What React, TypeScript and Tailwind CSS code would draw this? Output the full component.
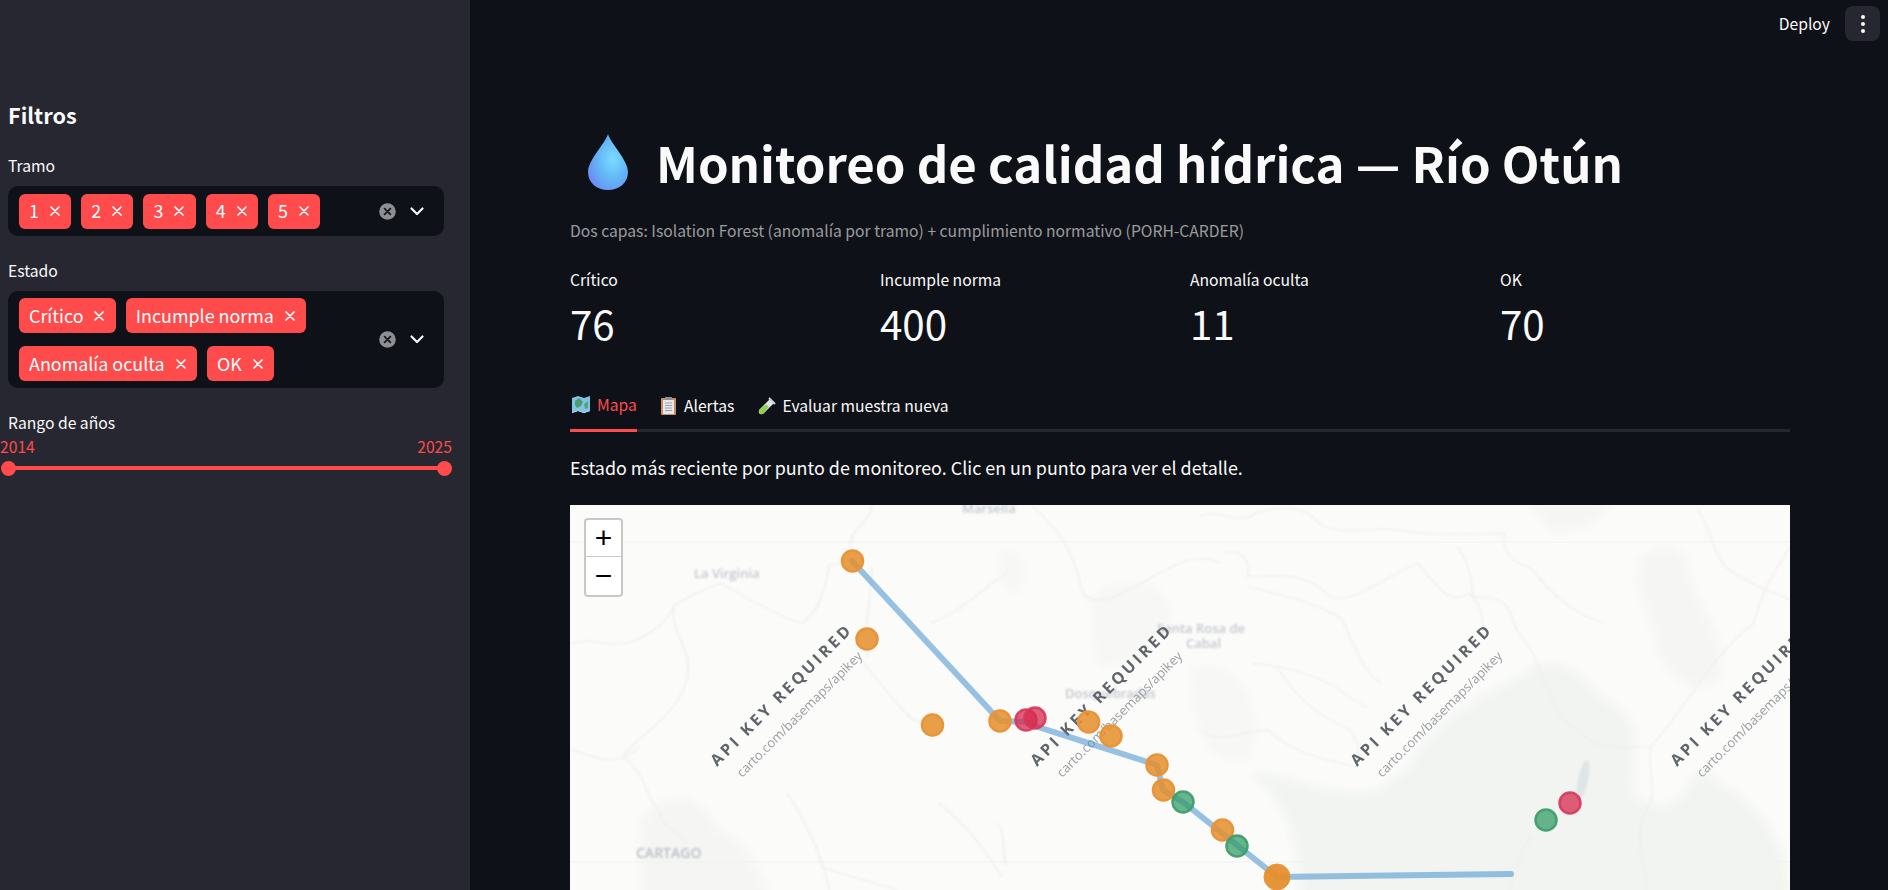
import React from 'react';

const FONT = "font-['Noto_Sans_CJK_SC','Source_Sans_Pro',sans-serif]";

function Pill({ label }: { label: string }) {
  return (
    <span className="flex h-[35px] items-center rounded-[6px] bg-[#ff4b4b] pl-[10px] pr-[11.3px] text-[17.9px] leading-none text-white">
      <span>{label}</span>
      <svg className="ml-[11px]" width="10" height="10" viewBox="0 0 10 10">
        <path d="M1 1L9 9M9 1L1 9" stroke="#fff" strokeWidth="1.7" strokeLinecap="round" />
      </svg>
    </span>
  );
}

function MultiSelect({ children }: { children: React.ReactNode }) {
  return (
    <div className="flex min-h-[50px] w-[436px] items-center rounded-[10px] bg-[#0e1117] py-[7px] pl-[11px]">
      <div className="flex w-[350px] flex-wrap gap-x-[10px] gap-y-[13px]">{children}</div>
      <svg className="ml-[10px]" width="17" height="17" viewBox="0 0 17 17">
        <circle cx="8.5" cy="8.5" r="8.3" fill="#8e8e93" />
        <path d="M5.6 5.6L11.4 11.4M11.4 5.6L5.6 11.4" stroke="#15171d" strokeWidth="1.8" strokeLinecap="round" />
      </svg>
      <svg className="ml-[14px]" width="14" height="9" viewBox="0 0 14 9">
        <path d="M1.5 1.5L7 7L12.5 1.5" stroke="#fafafa" strokeWidth="2.2" fill="none" strokeLinecap="round" strokeLinejoin="round" />
      </svg>
    </div>
  );
}

function Sidebar() {
  return (
    <aside className="flex h-full w-[470px] shrink-0 flex-col bg-[#262730] pt-[97px] text-[#fafafa]">
      <h2 className="ml-[8px] text-[21.7px] font-semibold leading-[36px]">Filtros</h2>
      <label className="ml-[8px] mt-[21px] text-[15.7px] leading-[24px]">Tramo</label>
      <div className="ml-[8px] mt-[8px]">
        <MultiSelect>
          {['1', '2', '3', '4', '5'].map(t => <Pill key={t} label={t} />)}
        </MultiSelect>
      </div>
      <label className="ml-[8px] mt-[23px] text-[15.7px] leading-[24px]">Estado</label>
      <div className="ml-[8px] mt-[8px]">
        <MultiSelect>
          {['Crítico', 'Incumple norma', 'Anomalía oculta', 'OK'].map(t => <Pill key={t} label={t} />)}
        </MultiSelect>
      </div>
      <label className="ml-[8px] mt-[23px] text-[15.7px] leading-[24px]">Rango de años</label>
      <div className="flex w-[452px] justify-between text-[15.7px] leading-[24px] text-[#ff4b4b]">
        <span>2014</span>
        <span>2025</span>
      </div>
      <div className="relative ml-[8px] mt-[7px] h-[4px] w-[436px] bg-[#ff4b4b]">
        <span className="absolute left-[-7.5px] top-[-5.5px] h-[15px] w-[15px] rounded-full bg-[#ff4b4b]" />
        <span className="absolute right-[-7.5px] top-[-5.5px] h-[15px] w-[15px] rounded-full bg-[#ff4b4b]" />
      </div>
    </aside>
  );
}

function Droplet() {
  return (
    <svg width="40" height="56" viewBox="0 0 40 56" className="shrink-0">
      <defs>
        <radialGradient id="drop" cx="0.62" cy="0.45" r="0.7">
          <stop offset="0" stopColor="#7bdcff" />
          <stop offset="0.55" stopColor="#62b4f5" />
          <stop offset="1" stopColor="#6f86f7" />
        </radialGradient>
      </defs>
      <path d="M20 0C23 10 40 26 40 38C40 49 31 56 20 56C9 56 0 49 0 38C0 26 17 10 20 0Z" fill="url(#drop)" />
    </svg>
  );
}

function MapIcon() {
  return (
    <svg width="18" height="17" viewBox="0 0 18 17">
      <path d="M0 2L6 0L12 2L18 0V15L12 17L6 15L0 17Z" fill="#7ec4e8" />
      <path d="M3 5L7 2L11 6L9 10L5 12L3 9Z" fill="#4f9a6a" />
      <path d="M12 8L16 5V12L13 13Z" fill="#5aa377" />
      <path d="M0 16.2L6 14.4L12 16.2L18 14.4V15L12 17L6 15L0 17Z" fill="#dfe7ee" />
    </svg>
  );
}

function ClipboardIcon() {
  return (
    <svg width="15" height="18" viewBox="0 0 15 18">
      <rect x="0" y="1" width="15" height="17" rx="1" fill="#c98d5f" />
      <rect x="2" y="3" width="11" height="14" fill="#e6e8ec" />
      <rect x="4" y="0" width="7" height="3" fill="#8a8f99" />
      <path d="M4 6H11M4 8.5H11M4 11H11M4 13.5H11" stroke="#9aa0aa" strokeWidth="1" />
    </svg>
  );
}

function TubeIcon() {
  return (
    <svg width="18" height="18" viewBox="0 0 18 18">
      <path d="M12 2L16 6L6 16C4.5 17.5 2.5 17.5 1.5 16.5C0.5 15.5 0.5 13.5 2 12Z" fill="#dfe7ee" />
      <path d="M8 7.5L11 9.5L6 16C4.5 17.5 2.5 17.5 1.5 16.5C0.5 15.5 0.5 13.5 2 12Z" fill="#8fd14f" />
      <path d="M11 1L17 7" stroke="#cbd5de" strokeWidth="2" />
    </svg>
  );
}

const ORANGE: [number, number][] = [
  [852.5, 561], [867, 639], [932.5, 725], [1000, 721], [1088.6, 722], [1111, 736], [1157, 765], [1163.5, 790], [1222.5, 830],
];
const RED: [number, number][] = [[1026, 720], [1035, 718], [1570, 803]];
const GREEN: [number, number][] = [[1183, 802], [1237, 846], [1546, 820]];
const WATERMARKS = [0, 320, 640, 960];

function OtunMap() {
  return (
    <svg viewBox="570 505 1220 395" width="1220" height="395" className="block">
      <defs>
        <filter id="veg" x="-10%" y="-10%" width="120%" height="120%">
          <feGaussianBlur stdDeviation="4" />
        </filter>
        <filter id="soft" x="-5%" y="-5%" width="110%" height="110%">
          <feGaussianBlur stdDeviation="1" />
        </filter>
        <filter id="softer" x="-5%" y="-20%" width="110%" height="140%">
          <feGaussianBlur stdDeviation="1.1" />
        </filter>
        <filter id="wm">
          <feGaussianBlur stdDeviation="0.35" />
        </filter>
      </defs>
      <rect x="570" y="505" width="1220" height="395" fill="#fbfbf9" />

      {/* vegetation patches */}
      <g filter="url(#veg)" fill="#f1f4f0">
        <path d="M1410 765C1440 710 1500 690 1530 670C1570 650 1590 690 1620 710C1650 730 1620 790 1640 800C1680 820 1690 780 1700 770C1730 790 1790 820 1790 900H1300C1300 850 1290 800 1250 775C1290 770 1320 800 1380 790Z" />
        <path d="M1640 560C1660 540 1690 545 1690 575C1700 610 1730 640 1720 680C1690 700 1660 670 1655 640C1650 610 1630 590 1640 560Z" opacity="0.6" />
        <path d="M1530 505H1610C1600 525 1570 535 1550 530Z" opacity="0.6" />
        <path d="M1000 550C1020 545 1030 570 1020 590C1010 600 1000 580 1000 550Z" opacity="0.4" />
        <path d="M1090 600C1110 570 1180 580 1170 620C1150 650 1110 680 1095 660Z" opacity="0.35" />
        <path d="M640 820C680 780 700 800 720 830C760 850 770 900 770 900H640Z" opacity="0.6" />
        <path d="M1190 670C1230 650 1270 700 1250 760C1210 770 1190 730 1190 670Z" opacity="0.35" />
      </g>

      {/* rivers and roads */}
      <g filter="url(#soft)" fill="none" stroke="#ebedec" strokeWidth="3">
        <g transform="translate(560 490) scale(0.4209 0.3333)">
          <path d="M740 45C740 100 690 110 690 170" />
          <path d="M25 460C80 440 130 480 180 450C230 420 250 400 270 350C300 320 340 300 380 280C430 310 500 370 570 400C610 380 630 300 640 225L690 215" />
          <path d="M270 350C260 430 320 480 300 570C280 680 180 740 150 800C210 860 200 920 240 970C230 1000 280 1020 300 1060" />
          <path d="M25 780C90 800 130 840 190 770" />
          <path d="M720 520C780 600 820 690 860 700" />
          <path d="M740 230C740 330 720 420 730 500" />
          <path d="M880 400C950 370 1000 300 1060 250" />
          <path d="M1120 45C1180 110 1220 180 1240 300C1250 340 1300 340 1350 300C1420 260 1500 170 1568 220" />
          <path d="M540 910C590 1010 620 1090 640 1200" />
          <path d="M620 1130C690 1160 750 1180 800 1200" />
          <path d="M900 940C960 1000 1000 1060 1050 1160" />
          <path d="M1040 1000C1060 1040 1050 1090 1060 1130" />
        </g>
        <g transform="translate(1200 490) scale(0.3954 0.3333)">
          <path d="M0 80C40 50 100 110 140 70C200 50 260 40 300 100C360 140 420 110 500 120C600 140 700 130 770 130C760 190 800 220 830 230C870 270 900 350 1020 400" />
          <path d="M60 190C120 170 130 240 120 260C200 260 260 240 330 320C370 350 470 260 550 220C600 280 620 350 680 310C720 350 710 400 720 430" />
          <path d="M120 290C200 310 320 350 360 390C390 470 420 560 460 580" />
          <path d="M130 520C220 530 300 560 340 590C400 640 430 660 420 650" />
          <path d="M200 540C240 610 270 660 380 720C400 760 410 790 390 800" />
          <path d="M0 720C60 770 100 720 170 720C240 790 290 800 390 830" />
        </g>
      </g>
      <g filter="url(#soft)" fill="none" stroke="#f3ebeb" strokeWidth="3">
        <g transform="translate(1200 490) scale(0.3954 0.3333)">
          <path d="M650 170C680 210 690 280 690 320C770 320 780 340 800 420C850 480 860 560 890 620C900 680 950 720 1000 760C1060 780 1100 770 1140 770C1240 640 1290 500 1400 400C1430 260 1490 180 1492 170" />
          <path d="M1140 770C1130 850 1160 900 1130 960C1090 1040 1130 1120 1130 1200" />
          <path d="M1260 60C1290 110 1300 200 1330 230C1380 280 1440 300 1492 330" />
          <path d="M840 1040C810 1070 810 1130 780 1200" />
        </g>
      </g>
      <ellipse cx="1583" cy="780" rx="5" ry="20" fill="#dfe4e6" filter="url(#softer)" transform="rotate(12 1583 780)" />

      {/* tile seams */}
      <path d="M570 542H1790M570 862H1790" stroke="#f1f1ef" strokeWidth="1" />

      {/* blurred place names */}
      <g filter="url(#softer)" fill="#c4c8cf" fontFamily="'Open Sans',sans-serif" fontWeight="600">
        <text x="694" y="578" fontSize="13">La Virginia</text>
        <text x="962" y="513" fontSize="13">Marsella</text>
        <text x="1157" y="633" fontSize="13">Santa Rosa de</text>
        <text x="1186" y="648" fontSize="13">Cabal</text>
        <text x="1065" y="698" fontSize="13">Dosquebradas</text>
        <text x="636" y="858" fontSize="14" fill="#b9bdc5">CARTAGO</text>
      </g>

      {/* api key watermarks */}
      <g filter="url(#wm)" fontFamily="'Open Sans',sans-serif">
        {WATERMARKS.map(dx => (
          <g key={dx} transform={`translate(${dx} 0)`}>
            <text transform="rotate(-45 717 767)" x="717" y="767" fontSize="16" fontWeight="700" letterSpacing="3" fill="#60656c">API KEY REQUIRED</text>
            <text transform="rotate(-45 742 778)" x="742" y="778" fontSize="13" fill="#9a9ea4">carto.com/basemaps/apikey</text>
          </g>
        ))}
      </g>

      {/* river line */}
      <polyline
        points="852,561 1000,721 1026,722 1038,727 1157,765 1163,790 1183,802 1277,877 1511,874"
        fill="none"
        stroke="#3388cc"
        strokeOpacity="0.5"
        strokeWidth="6"
        strokeLinecap="round"
        strokeLinejoin="round"
      />

      {/* monitoring points */}
      {ORANGE.map(([x, y]) => (
        <circle key={`${x}-${y}`} cx={x} cy={y} r="10.5" fill="#e58e2c" fillOpacity="0.85" stroke="#e8953a" strokeWidth="2.5" />
      ))}
      <circle cx="1277" cy="877" r="13" fill="#e58e2c" fillOpacity="0.95" stroke="#e8953a" strokeWidth="1" />
      {RED.map(([x, y]) => (
        <circle key={`${x}-${y}`} cx={x} cy={y} r="10.5" fill="#d62a4e" fillOpacity="0.75" stroke="#d8365a" strokeOpacity="0.9" strokeWidth="2.5" />
      ))}
      {GREEN.map(([x, y]) => (
        <circle key={`${x}-${y}`} cx={x} cy={y} r="10.5" fill="#2e9a62" fillOpacity="0.72" stroke="#3f9e6e" strokeOpacity="0.95" strokeWidth="2.5" />
      ))}
    </svg>
  );
}

const METRICS = [
  ['Crítico', '76'],
  ['Incumple norma', '400'],
  ['Anomalía oculta', '11'],
  ['OK', '70'],
];

export default function App() {
  return (
    <div className={`flex h-[890px] w-[1888px] overflow-hidden bg-[#0e1117] ${FONT}`}>
      <Sidebar />
      <main className="relative min-w-0 flex-1 pl-[100px] pr-[98px] pt-[127px] text-[#fafafa]">
        <div className="absolute right-[8px] top-[6px] flex items-center">
          <span className="text-[15.7px] leading-[35px]">Deploy</span>
          <span className="ml-[15px] flex h-[35px] w-[35px] flex-col items-center justify-center gap-[3px] rounded-[8px] bg-[#262730]">
            <span className="h-[4px] w-[4px] rounded-full bg-[#fafafa]" />
            <span className="h-[4px] w-[4px] rounded-full bg-[#fafafa]" />
            <span className="h-[4px] w-[4px] rounded-full bg-[#fafafa]" />
          </span>
        </div>

        <div className="flex h-[70px] items-center pl-[18px]">
          <Droplet />
          <h1 className="ml-[28px] text-[49.1px] font-bold leading-[70px]">Monitoreo de calidad hídrica — Río Otún</h1>
        </div>

        <p className="mt-[22px] text-[15.7px] leading-[24px] text-[#fafafa]/60">
          Dos capas: Isolation Forest (anomalía por tramo) + cumplimiento normativo (PORH-CARDER)
        </p>

        <div className="mt-[25px] grid grid-cols-[310px_310px_310px_290px]">
          {METRICS.map(([name, value]) => (
            <div key={name}>
              <div className="text-[15.7px] leading-[24px]">{name}</div>
              <div className="mt-[5px] text-[40.3px] leading-[52px]">{value}</div>
            </div>
          ))}
        </div>

        <div className="mt-[33px] flex h-[50px] gap-[24px] border-b-[3px] border-[#26282e] text-[15.7px]">
          <div className="-mb-[3px] flex h-[50px] items-center gap-[7px] border-b-[3px] border-[#ff4b4b] pb-[2px] pl-[2px] text-[#ff4b4b]">
            <MapIcon /> <span>Mapa</span>
          </div>
          <div className="flex h-[47px] items-center gap-[8px]">
            <ClipboardIcon /> <span>Alertas</span>
          </div>
          <div className="flex h-[47px] items-center gap-[6px]">
            <TubeIcon /> <span>Evaluar muestra nueva</span>
          </div>
        </div>

        <p className="mt-[21px] text-[17.9px] leading-[28px]">
          Estado más reciente por punto de monitoreo. Clic en un punto para ver el detalle.
        </p>

        <div className="relative mt-[24px]">
          <OtunMap />
          <div className="absolute left-[14px] top-[13px] flex w-[39px] flex-col rounded-[4px] border-2 border-[#c8c8c8] bg-white font-['Liberation_Sans',sans-serif] text-black">
            <span className="flex h-[37px] items-center justify-center border-b border-[#ccc] text-[30px] leading-none">+</span>
            <span className="flex h-[38px] items-center justify-center text-[30px] leading-none">−</span>
          </div>
        </div>
      </main>
    </div>
  );
}
